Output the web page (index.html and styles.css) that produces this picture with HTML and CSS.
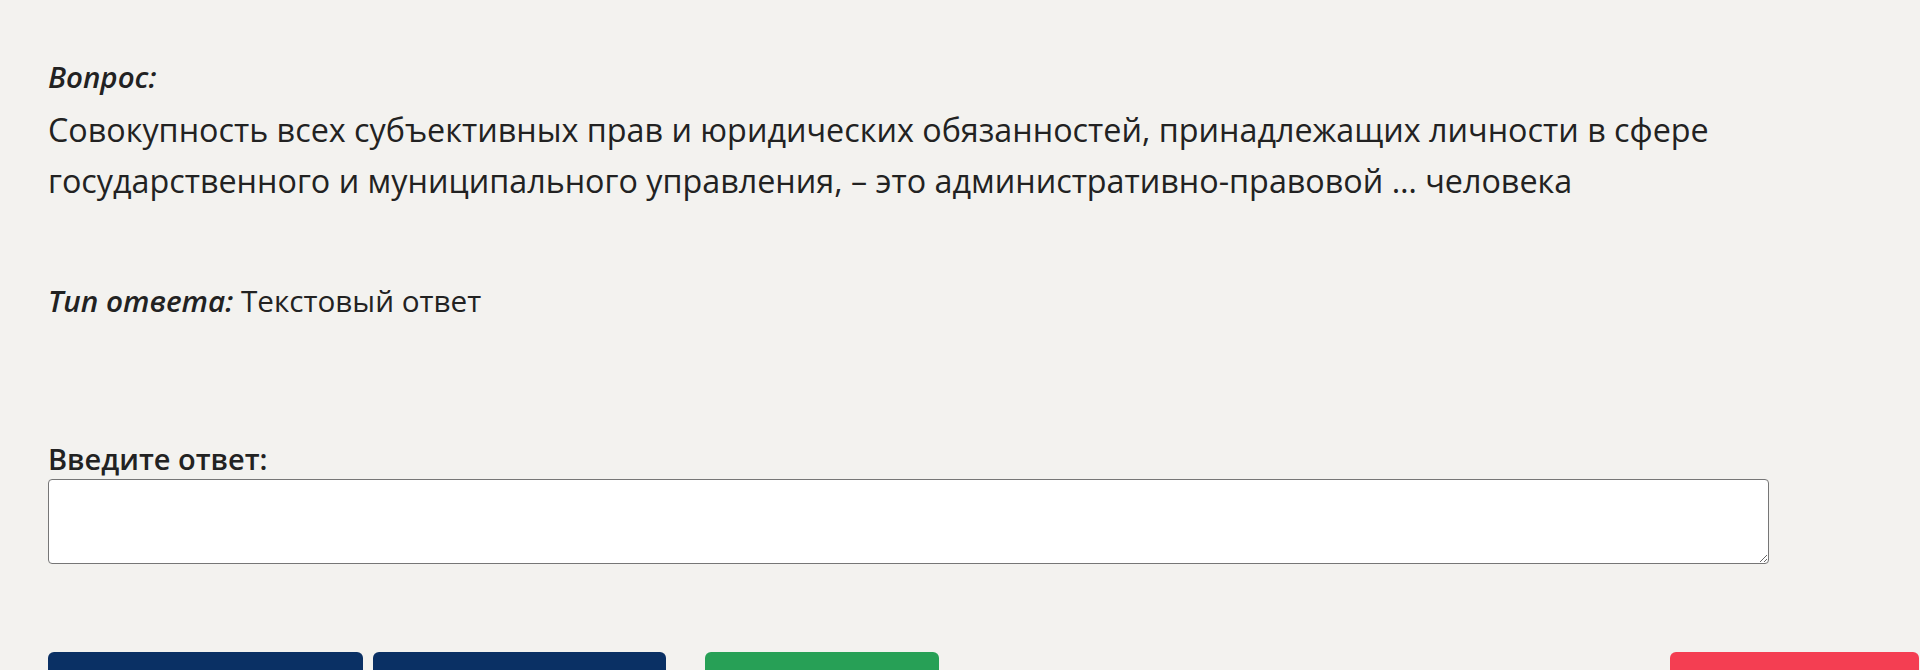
FILE: index.html
```html
<!DOCTYPE html>
<html lang="ru">
<head>
<meta charset="UTF-8">
<meta name="viewport" content="width=device-width, initial-scale=1.0">
<title>Вопрос теста</title>
<link rel="stylesheet" href="styles.css">
</head>
<body>
<form class="test-form" action="answer.php" method="post">
  <div class="question">
    <div class="caption">Вопрос:</div>
    <div class="question-text">Совокупность всех субъективных прав и юридических обязанностей, принадлежащих личности в сфере государственного и муниципального управления, – это административно-правовой … человека</div>
  </div>

  <div class="answer-type">
    <span class="caption">Тип ответа:</span> Текстовый ответ
  </div>

  <div class="answer-field">
    <label for="answer">Введите ответ:</label>
    <textarea id="answer" name="answer"></textarea>
  </div>

  <div class="actions">
    <button type="button" class="btn btn-dark btn-prev"></button>
    <button type="button" class="btn btn-dark btn-next"></button>
    <button type="submit" class="btn btn-green"></button>
    <button type="button" class="btn btn-red"></button>
  </div>
</form>
</body>
</html>
```

FILE: styles.css
```css
/* Page */
body {
    margin: 0;
    background-color: #f3f2ef;
    color: #222;
    font-family: "Open Sans", "Noto Sans", sans-serif;
    font-size: 32.3px;
}

.test-form {
    padding: 51px 1px 0 48px;
}

/* Question block */
.question {
    line-height: 51px;
}

.question .caption {
    font-size: 29.5px;
}

.question-text {
    width: 1721px;
    margin-top: 2px;
}

.caption {
    font-style: italic;
    font-weight: 600;
}

/* Answer type */
.answer-type {
    margin-top: 69px;
    font-size: 29.7px;
    line-height: 51px;
}

/* Answer field */
.answer-field {
    margin-top: 114px;
}

.answer-field label {
    display: block;
    font-size: 29px;
    font-weight: 600;
    line-height: 38px;
    margin-bottom: 1px;
}

.answer-field textarea {
    display: block;
    width: 1721px;
    height: 85px;
    box-sizing: border-box;
    border: 1px solid #767676;
    border-radius: 4px;
    background-color: #fff;
    font-family: inherit;
    font-size: 24px;
}

/* Buttons */
.actions {
    display: flex;
    gap: 10px;
    margin-top: 88px;
}

.btn {
    height: 56px;
    border: none;
    border-radius: 6px;
    cursor: pointer;
}

.btn-dark {
    background-color: #0a3064;
}

.btn-prev {
    width: 315px;
}

.btn-next {
    width: 293px;
}

.btn-green {
    width: 234px;
    margin-left: 29px;
    background-color: #27a056;
}

.btn-red {
    width: 249px;
    margin-left: auto;
    background-color: #f43e52;
}
```
